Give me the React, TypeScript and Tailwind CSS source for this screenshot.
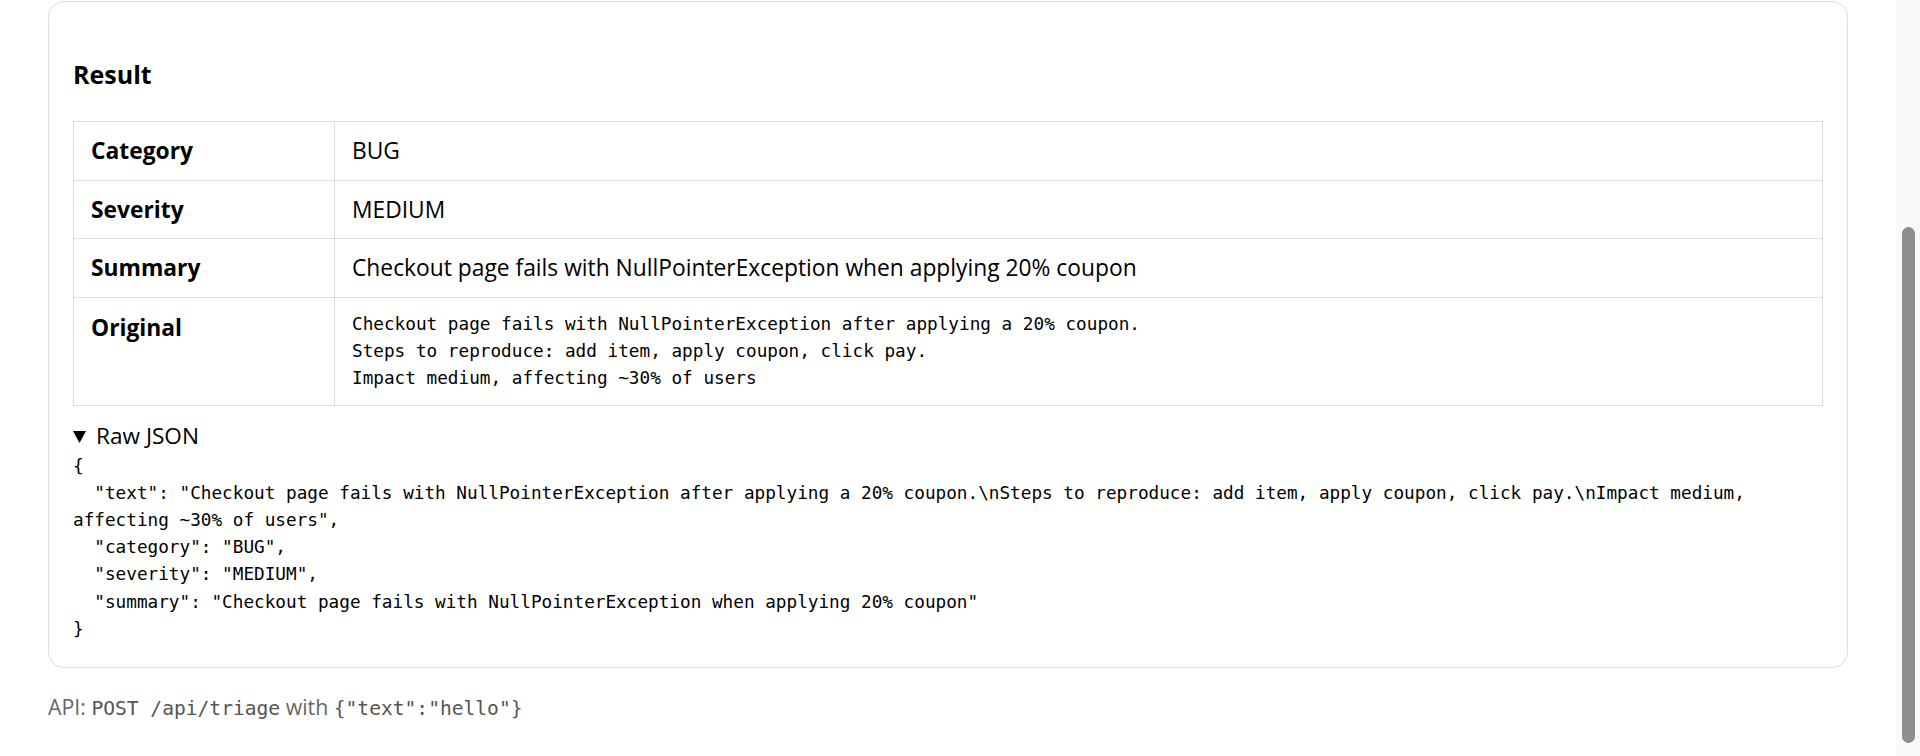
const original =
  "Checkout page fails with NullPointerException after applying a 20% coupon.\nSteps to reproduce: add item, apply coupon, click pay.\nImpact medium, affecting ~30% of users";

const result = {
  text: original,
  category: "BUG",
  severity: "MEDIUM",
  summary: "Checkout page fails with NullPointerException when applying 20% coupon",
};

const rows = [
  { label: "Category", value: result.category },
  { label: "Severity", value: result.severity },
  { label: "Summary", value: result.summary },
];

function ResultTable() {
  return (
    <div className="mt-[30px] grid grid-cols-[261px_1fr] border-l border-t border-[#dddddd] text-[22.8px] text-black">
      {rows.map((row) => (
        <div key={row.label} className="contents">
          <div className="border-b border-r border-[#dddddd] px-[17px] py-[12px] font-bold leading-[33.5px]">
            {row.label}
          </div>
          <div className="border-b border-r border-[#dddddd] px-[17px] py-[12px] leading-[33.5px]">
            {row.value}
          </div>
        </div>
      ))}
      <div className="border-b border-r border-[#dddddd] px-[17px] pb-[12px] pt-[13px] font-bold leading-[33.5px]">
        Original
      </div>
      <div className="whitespace-pre-wrap border-b border-r border-[#dddddd] px-[17px] py-[13px] font-['DejaVu_Sans_Mono',monospace] text-[17.7px] leading-[27px]">
        {original}
      </div>
    </div>
  );
}

function RawJson() {
  return (
    <details open className="mt-[14px]">
      <summary className="flex cursor-pointer gap-[10px] text-[22.6px] leading-[31px] text-black">
        <svg width="13" height="12" viewBox="0 0 13 12" className="mt-[11px] shrink-0">
          <polygon points="0,0 13,0 6.5,12" fill="#000" />
        </svg>
        <span>Raw JSON</span>
      </summary>
      <pre className="mt-[2px] whitespace-pre-wrap break-words pr-[40px] font-['DejaVu_Sans_Mono',monospace] text-[17.7px] leading-[27.2px] text-black">
        {JSON.stringify(result, null, 2)}
      </pre>
    </details>
  );
}

function Scrollbar() {
  return (
    <div className="w-[24px] shrink-0 bg-[#f9f9f9]">
      <div className="ml-[6px] mt-[227px] h-[516px] w-[13px] rounded-full bg-[#8e8e8e]" />
    </div>
  );
}

export default function App() {
  return (
    <div className="flex h-[756px] overflow-hidden bg-white font-['Open_Sans',sans-serif]">
      <main className="min-w-0 flex-1 px-[48px] pt-[1px]">
        <section className="rounded-[16px] border border-[#dedede] bg-white px-[24px] pb-[24px] pt-[55px]">
          <h3 className="text-[25px] font-bold leading-[34px] text-black">Result</h3>
          <ResultTable />
          <RawJson />
        </section>

        <p className="mt-[24px] text-[21.3px] leading-[30px] text-[#666666]">
          API:{" "}
          <code className="font-['DejaVu_Sans_Mono',monospace] text-[19.6px] text-[#555555]">
            POST /api/triage
          </code>{" "}
          with{" "}
          <code className="font-['DejaVu_Sans_Mono',monospace] text-[19.6px] text-[#555555]">
            {'{"text":"hello"}'}
          </code>
        </p>
      </main>
      <Scrollbar />
    </div>
  );
}
